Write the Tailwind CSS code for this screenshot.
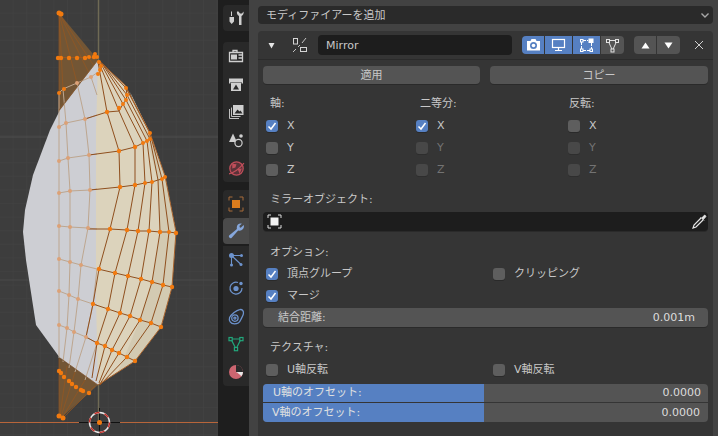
<!DOCTYPE html>
<html lang="ja">
<head>
<meta charset="utf-8">
<script src="https://cdn.jsdelivr.net/npm/@tailwindcss/browser@4"></script>
</head>
<body class="bg-[#3d3d3d]">
<div class="flex w-[718px] h-[436px] overflow-hidden bg-[#3d3d3d] text-[11px] leading-[14px] text-[#c8c8c8] font-['DejaVu_Sans','Noto_Sans_CJK_JP',sans-serif]">

  <!-- 3D viewport -->
  <div class="w-[218px] h-full shrink-0 bg-[#3d3d3d]">
    <svg width="218" height="436" viewBox="0 0 218 436" fill="none">
      <defs>
        <pattern id="minor" width="13.6" height="13.6" x="-1" y="-1" patternUnits="userSpaceOnUse">
          <path d="M13.6 0H0V13.6" stroke="#434343" stroke-width="1"/>
        </pattern>
      </defs>
      <rect width="218" height="436" fill="url(#minor)"/>
      <path d="M0 137H218" stroke="#4f4f4f"/>
      <path d="M0 280H218" stroke="#4b4b4b"/>
      <path d="M98.500 0V60" stroke="#6f6a55" stroke-width="1.500"/>
      <path d="M98.500 385V422" stroke="#6f6a55" stroke-width="1.500"/>
      <path d="M0 422.500H218" stroke="#b8653a"/>

      <!-- brown cones -->
      <path d="M59 13L98 60L59 112Z" fill="#735635"/>
      <path d="M59 358L98 385L61 418L59 416Z" fill="#735635"/>
      <g stroke="#9c561c" stroke-width="0.800" opacity="0.800">
        <path d="M59 13V112M59 13L63 89M59 13L77 83M59 13L91 77M59 13L98 72"/>
        <path d="M59 416V358M60 416L67 366M61 417L75 372M62 418L85 380M63 418L95 386"/>
      </g>
      <path d="M59 57.500H94" stroke="#9c561c"/>

      <!-- silhouette -->
      <path d="M98 60L60 110L50 130L33 175L25 210L23 232L26 260L36 325L60 358L98 385V60Z" fill="#cdced3"/>
      <path d="M98 60L125 85L150 133L165 176L176 232L172 287L161 327L135 361L98 385L96 300V130Z" fill="#dcd3bc"/>
      <path d="M130 92L150 133L165 176L176 232L172 287L161 327L135 361L118 372L140 320L152 282L160 232L158 180L147 141Z" fill="#d3cab2"/>

      <!-- left mirrored edges -->
      <g stroke="#bda68f" stroke-width="1" fill="none">
        <path d="M59 93L63 89L77 83L91 77L98 72"/>
        <path d="M59 127L66 123L85 119L97 115"/>
        <path d="M59 161L68 158L89 155L97 154"/>
        <path d="M59 193L70 191L90 190L97 189"/>
        <path d="M59 226L70 227L88 228L97 229"/>
        <path d="M59 259L70 262L81 265L97 269"/>
        <path d="M59 291L69 295L78 299L93 304L97 305"/>
        <path d="M59 325L67 328L74 332L86 337L97 343"/>
        <path d="M59 93V358"/>
        <path d="M63 89L66 123L68 158L70 191L70 227L70 262L69 295L67 328L63 362"/>
        <path d="M77 83L85 119L89 155L90 190L88 228L81 265L78 299L74 332L69 368"/>
        <path d="M91 77L97 95"/>
        <path d="M97 269L93 304L86 337L75 372"/>
        <path d="M97 343L85 380"/>
      </g>
      <!-- right edges -->
      <g stroke="#8f4f1e" stroke-width="1" fill="none">
        <path d="M88 229L110 229L127 230L138 231L149 231L160 232L169 232L176 233"/>
        <path d="M98 269L115 273L128 276L141 279L152 282L163 285L172 287"/>
        <path d="M93 304L108 309L120 313L130 316L140 320L151 323L161 327"/>
        <path d="M86 337L97 343L105 346L112 350L119 353L127 357L135 361"/>
        <path d="M90 190L120 187L135 185L145 183L152 182L158 180L162 179L165 176"/>
        <path d="M89 155L119 151L135 147L143 143L147 141L150 139L150 133"/>
        <path d="M85 119L107 112L119 111L123 104L126 100L127 95L126 88"/>
        <path d="M98 62L107 112L119 151L120 187L110 229L99 269L93 304L86 337"/>
        <path d="M99 63L119 111L135 147L135 185L127 230L115 273L108 309L97 343L92 378"/>
        <path d="M100 62L123 104L143 143L145 183L138 231L128 276L120 313L105 346L96 381"/>
        <path d="M101 62L126 100L147 141L152 182L149 231L141 279L130 316L112 350L99 383"/>
        <path d="M102 63L127 95L150 139L158 180L160 232L152 282L140 320L119 353L100 384"/>
        <path d="M103 64L126 88L150 133L162 179L169 232L163 285L151 323L127 357L100 385"/>
      </g>
      <path d="M98 60L125 85L150 133L165 176L176 232L172 287L161 327L135 361L98 385" stroke="#a8622c" stroke-width="1"/>
      <path d="M98 60L59 110M98 385L60 358" stroke="#8a5a30" stroke-width="0.800"/>

      <!-- mirrored vertices -->
      <g fill="#dca176">
        <circle cx="59" cy="127" r="2"/><circle cx="66" cy="123" r="2"/><circle cx="85" cy="119" r="2"/><circle cx="91" cy="77" r="2"/>
        <circle cx="77" cy="83" r="2"/>
        <circle cx="59" cy="161" r="2"/><circle cx="68" cy="158" r="2"/><circle cx="89" cy="155" r="2"/>
        <circle cx="59" cy="193" r="2"/><circle cx="70" cy="191" r="2"/><circle cx="90" cy="190" r="2"/>
        <circle cx="59" cy="226" r="2"/><circle cx="70" cy="227" r="2"/><circle cx="88" cy="228" r="2"/>
        <circle cx="59" cy="259" r="2"/><circle cx="70" cy="262" r="2"/><circle cx="81" cy="265" r="2"/>
        <circle cx="59" cy="325" r="2"/><circle cx="67" cy="328" r="2"/><circle cx="74" cy="332" r="2"/><circle cx="86" cy="337" r="2"/>
        <circle cx="59" cy="291" r="2"/><circle cx="69" cy="295" r="2"/><circle cx="78" cy="299" r="2"/>
      </g>
      <!-- selected vertices -->
      <g fill="#f27a0f">
        <circle cx="59" cy="13" r="2.500"/><circle cx="61" cy="14" r="2.500"/>
        <circle cx="58" cy="58" r="2.200"/><circle cx="61" cy="58" r="2.200"/><circle cx="69" cy="58" r="2.200"/><circle cx="77" cy="58" r="2.200"/><circle cx="85" cy="58" r="2.200"/><circle cx="89" cy="57" r="2"/><circle cx="94" cy="57" r="2.200"/><circle cx="95" cy="54" r="2"/><circle cx="97" cy="57" r="2"/>
        <circle cx="59" cy="93" r="2"/><circle cx="64" cy="89" r="2"/>
        <circle cx="99" cy="62" r="2"/><circle cx="101" cy="66" r="2"/><circle cx="100" cy="70" r="2"/><circle cx="98" cy="74" r="2"/>
        <circle cx="107" cy="112" r="2.200"/><circle cx="119" cy="108" r="2.200"/><circle cx="123" cy="104" r="2"/><circle cx="126" cy="100" r="2"/><circle cx="127" cy="95" r="2"/><circle cx="126" cy="88" r="2"/>
        <circle cx="119" cy="151" r="2.200"/><circle cx="135" cy="147" r="2.200"/><circle cx="143" cy="143" r="2"/><circle cx="147" cy="141" r="2"/><circle cx="150" cy="139" r="2"/><circle cx="150" cy="133" r="2"/>
        <circle cx="120" cy="187" r="2.200"/><circle cx="135" cy="185" r="2.200"/><circle cx="145" cy="183" r="2"/><circle cx="152" cy="182" r="2"/><circle cx="162" cy="179" r="2"/><circle cx="165" cy="177" r="2"/>
        <circle cx="110" cy="229" r="2.200"/><circle cx="127" cy="230" r="2.200"/><circle cx="138" cy="231" r="2.200"/><circle cx="149" cy="231" r="2.200"/><circle cx="160" cy="232" r="2.200"/><circle cx="169" cy="232" r="2"/><circle cx="176" cy="233" r="2.200"/>
        <circle cx="99" cy="269" r="2.200"/><circle cx="115" cy="273" r="2.200"/><circle cx="128" cy="276" r="2.200"/><circle cx="141" cy="279" r="2.200"/><circle cx="152" cy="282" r="2.200"/><circle cx="163" cy="285" r="2.200"/><circle cx="172" cy="287" r="2.200"/>
        <circle cx="93" cy="304" r="2.200"/><circle cx="108" cy="309" r="2.200"/><circle cx="120" cy="313" r="2.200"/><circle cx="130" cy="316" r="2.200"/><circle cx="140" cy="320" r="2.200"/><circle cx="151" cy="323" r="2.200"/><circle cx="161" cy="327" r="2.200"/>
        <circle cx="97" cy="343" r="2.200"/><circle cx="105" cy="346" r="2.200"/><circle cx="112" cy="350" r="2.200"/><circle cx="119" cy="353" r="2.200"/><circle cx="127" cy="357" r="2.200"/><circle cx="135" cy="361" r="2.200"/>
        <circle cx="59" cy="371" r="2.200"/><circle cx="61" cy="373" r="2.200"/><circle cx="64" cy="377" r="2.200"/><circle cx="69" cy="381" r="2.200"/><circle cx="72" cy="384" r="2.200"/><circle cx="76" cy="387" r="2.200"/><circle cx="81" cy="390" r="2.200"/><circle cx="83" cy="391" r="2.200"/><circle cx="89" cy="393" r="2.200"/>
        <circle cx="59" cy="416" r="2.500"/><circle cx="63" cy="418" r="2.500"/>
      </g>

      <!-- 3D cursor -->
      <path d="M79 422.500H120M99.500 412V436M99.500 408V416" stroke="#111111"/>
      <circle cx="99.500" cy="422.500" r="10" stroke="#e9e9e9" stroke-width="1.500"/>
      <circle cx="99.500" cy="422.500" r="10" stroke="#c8302a" stroke-width="1.500" stroke-dasharray="5.200 5.200"/>
      <circle cx="99.500" cy="422.500" r="2.500" fill="#f27a0f"/>
    </svg>
  </div>

  <!-- tab column -->
  <div class="w-[31px] h-full shrink-0 bg-[#1e1e1e] pl-[5px] flex flex-col pt-[5px]">
    <div class="h-[26px] bg-[#292929] rounded-l-[4px] flex items-center justify-center">
      <svg width="16" height="16" viewBox="0 0 16 16" fill="#cfcfcf"><path d="M3 1.500h1V6H3zM1.500 7h4.500v4.500L3.700 14 1.500 11.500z"/><path d="M9 1.500C8.500 3.500 9.500 5.500 11 6V15h2.500V6C15 5.500 16 3.500 15.500 1.500L14 3.500h-2L10.500 1.500z"/></svg>
    </div>
    <div class="h-[11px]"></div>
    <div class="h-[28px] bg-[#292929] rounded-tl-[4px] flex items-center justify-center">
      <svg width="16" height="16" viewBox="0 0 16 16" fill="none" stroke="#cfcfcf" stroke-width="1.300"><path d="M1.500 4.500h13v9h-13zM5 4.500V2.500h4v2M10.500 7H14M10.500 10H14"/><rect x="3" y="6.500" width="6" height="5" fill="#cfcfcf" stroke="none"/></svg>
    </div>
    <div class="h-[28px] bg-[#292929] flex items-center justify-center">
      <svg width="16" height="16" viewBox="0 0 16 16"><path d="M1 2.500h14v5h-1.500V6h-11v1.500H1z" fill="#cfcfcf"/><path d="M3 6.500h10V15H3z" fill="#cfcfcf"/><path d="M5 13.500l3-5 3 5z" fill="#2a2a2a"/></svg>
    </div>
    <div class="h-[28px] bg-[#292929] flex items-center justify-center">
      <svg width="16" height="16" viewBox="0 0 16 16" fill="none" stroke="#c0c0c0"><path d="M1.500 5v9.500H11M3.500 3.500v9h9"/><rect x="5" y="1" width="10.500" height="10" fill="#cfcfcf" stroke="none"/><path d="M6.500 9.500l3-4 2 2 1-1 2 3z" fill="#2a2a2a" stroke="none"/></svg>
    </div>
    <div class="h-[28px] bg-[#292929] flex items-center justify-center">
      <svg width="16" height="16" viewBox="0 0 16 16" fill="none"><path d="M5 1.500L9 10H1z" fill="#cfcfcf"/><circle cx="13" cy="4" r="1.800" fill="#cfcfcf"/><circle cx="10.500" cy="11" r="3.600" stroke="#cfcfcf" stroke-width="1.200" fill="#292929"/></svg>
    </div>
    <div class="h-[28px] bg-[#292929] rounded-bl-[4px] flex items-center justify-center">
      <svg width="17" height="17" viewBox="0 0 16 16" fill="none"><circle cx="8" cy="8" r="6.300" stroke="#bf4e5a" stroke-width="1.200" fill="#5a3238"/><path d="M1 13C5 12 11 8 15 3" stroke="#bf4e5a" stroke-width="1.200"/><path d="M4 3.500l4 .5-1 3-3 1zM9 8.500l4-.5-2 5z" fill="#bf4e5a"/></svg>
    </div>
    <div class="h-[8px]"></div>
    <div class="h-[28px] bg-[#292929] rounded-tl-[4px] flex items-center justify-center">
      <svg width="16" height="16" viewBox="0 0 16 16" fill="none" stroke="#a96c3a"><path d="M1 4.500V1h3.500M11.500 1H15v3.500M15 11.500V15h-3.500M4.500 15H1v-3.500"/><rect x="4" y="4" width="8" height="8" fill="#d97c1e" stroke="none"/></svg>
    </div>
    <div class="h-[26px] bg-[#4a4a4a] rounded-l-[4px] flex items-center justify-center mb-[2px]">
      <svg width="17" height="17" viewBox="0 0 16 16" fill="#86a7dc"><path d="M14.800 1.800L12 4.500 11 4 10.800 2.500 13 .6C10.600-.2 8 1.700 8.300 4.500c.1.800.1 1.200-.4 1.700L1.300 11.500c-1.500 1.300.8 3.800 2.200 2.300L8.900 7.700c.5-.5.900-.6 1.700-.5 3 .3 5.100-2.500 4.200-5.400z"/></svg>
    </div>
    <div class="h-[28px] bg-[#292929] flex items-center justify-center">
      <svg width="16" height="16" viewBox="0 0 16 16" fill="#6d93cd" stroke="#6d93cd"><path d="M3 3.500L13 3.500M3.500 3.500V13M3.500 3.500L13 12.500" stroke-width="1.100"/><circle cx="3.500" cy="3.500" r="2.500" stroke="none"/><circle cx="13.500" cy="3.500" r="1.500" stroke="none"/><circle cx="3.500" cy="13" r="1.500" stroke="none"/><circle cx="13" cy="12.500" r="1.500" stroke="none"/></svg>
    </div>
    <div class="h-[28px] bg-[#292929] flex items-center justify-center">
      <svg width="16" height="16" viewBox="0 0 16 16" fill="none"><path d="M10 2.500A6 6 0 1 0 14 8" stroke="#6d93cd" stroke-width="1.200"/><circle cx="8" cy="8.500" r="2.600" fill="#6d93cd"/><circle cx="13" cy="3.500" r="1.700" fill="#6d93cd"/></svg>
    </div>
    <div class="h-[28px] bg-[#292929] flex items-center justify-center">
      <svg width="17" height="17" viewBox="0 0 16 16" fill="none" stroke="#6d93cd" stroke-width="1.200"><path d="M11 1.500c2.500-.5 4 1.500 3.500 4-.5 2-1.500 3.500-2.500 5.500-1 2.500-3 4-6 4-3.500 0-5.500-3-4.500-6C3 6 8 2 11 1.500z"/><circle cx="6.500" cy="9.500" r="3"/><circle cx="6.500" cy="9.500" r="1"/></svg>
    </div>
    <div class="h-[28px] bg-[#292929] flex items-center justify-center">
      <svg width="16" height="16" viewBox="0 0 16 16" fill="none" stroke="#22a67b" stroke-width="1.200"><path d="M3 3h10L8 13z"/><rect x="1" y="1.500" width="3.200" height="3.200" fill="#292929"/><rect x="11.800" y="1.500" width="3.200" height="3.200" fill="#292929"/><rect x="6.400" y="11.500" width="3.200" height="3.200" fill="#292929"/></svg>
    </div>
    <div class="h-[28px] bg-[#292929] rounded-bl-[4px] flex items-center justify-center">
      <svg width="16" height="16" viewBox="0 0 16 16"><circle cx="8" cy="8" r="7" fill="#cc6570"/><path d="M8 1a7 7 0 0 1 7 7H8z" fill="#2a2a2a"/><path d="M8 8h7a7 7 0 0 1-1.700 4.500C12 10.500 10 9 8 8z" fill="#e8e8e8"/></svg>
    </div>
  </div>

  <!-- properties -->
  <div class="flex-1 h-full pl-[9px] pr-[5px] pt-[6px] bg-[#424242] flex flex-col">
    <div class="h-[18px] rounded-[4px] bg-[#2a2a2a] pl-[8px] pr-[3px] flex items-center justify-between">
      <span class="pt-px">モディファイアーを追加</span>
      <svg width="10" height="10" viewBox="0 0 10 10" fill="none" stroke="#a8a8a8" stroke-width="1.400"><path d="M1.500 3.500L5 7l3.500-3.500"/></svg>
    </div>
    <div class="mt-[7px] flex-1 rounded-t-[4px] bg-[#353535] flex flex-col">
      <!-- header -->
      <div class="h-[29px] flex items-center border-b border-[#2b2b2b] shrink-0">
        <svg class="ml-[10px]" width="7" height="7" viewBox="0 0 7 7" fill="#e5e5e5"><path d="M0.500 1h6L3.500 6.500z"/></svg>
        <svg class="ml-[17px]" width="16" height="16" viewBox="0 0 16 16" fill="none" stroke="#d5d5d5"><rect x="1.500" y="1.500" width="4" height="5.500"/><rect x="8.500" y="10.500" width="6" height="4"/><path d="M1 15l3-3M6 10l2-2M10 6l4-5" stroke-width="0.900"/></svg>
        <div class="ml-[10px] w-[194px] h-[20px] rounded-[4px] bg-[#1d1d1d] pl-[8px] flex items-center"><span class="pt-px">Mirror</span></div>
        <div class="ml-[10px] flex h-[18px] gap-px">
          <div class="w-[22px] bg-[#5680c2] rounded-l-[4px] flex items-center justify-center">
            <svg width="15" height="14" viewBox="0 0 15 14"><path d="M1 3h3.500l1-2h4l1 2H14v9.500H1z" fill="#ffffff"/><circle cx="7.500" cy="7.500" r="3.500" fill="#5680c2"/><circle cx="7.500" cy="7.500" r="1.800" fill="#ffffff"/></svg>
          </div>
          <div class="w-[27px] bg-[#5680c2] flex items-center justify-center">
            <svg width="15" height="14" viewBox="0 0 15 14" fill="none" stroke="#ffffff" stroke-width="1.200"><rect x="1.500" y="1.500" width="12" height="8"/><path d="M7.500 9.500v3M4 12.500h7"/></svg>
          </div>
          <div class="w-[27px] bg-[#5680c2] flex items-center justify-center">
            <svg width="15" height="15" viewBox="0 0 15 15" fill="none" stroke="#ffffff"><path d="M4 2.500h5M2.500 4v7M12.500 5v6M4 12.500h7" stroke-dasharray="3 1"/><rect x="1.500" y="1.500" width="2.500" height="2.500"/><rect x="9.500" y="0.500" width="5" height="4.500" fill="#ffffff" stroke="none"/><rect x="1.500" y="11" width="2.500" height="2.500"/><rect x="11" y="11" width="2.500" height="2.500"/></svg>
          </div>
          <div class="w-[23px] bg-[#545454] rounded-r-[4px] flex items-center justify-center">
            <svg width="15" height="15" viewBox="0 0 15 15" fill="none" stroke="#e2e2e2"><path d="M3 2.500h9L7.500 12.500z"/><rect x="1.500" y="1.500" width="3" height="3" fill="#545454"/><rect x="10.500" y="1.500" width="3" height="3" fill="#545454"/><rect x="6" y="11" width="3" height="3" fill="#545454"/></svg>
          </div>
        </div>
        <div class="ml-[10px] flex h-[18px] gap-px">
          <div class="w-[22px] bg-[#545454] rounded-l-[4px] flex items-center justify-center">
            <svg width="9" height="7" viewBox="0 0 9 7" fill="#ffffff"><path d="M4.500 0.500L8.500 6.500H0.500z"/></svg>
          </div>
          <div class="w-[23px] bg-[#545454] rounded-r-[4px] flex items-center justify-center">
            <svg width="9" height="7" viewBox="0 0 9 7" fill="#ffffff"><path d="M0.500 0.500h8L4.500 6.500z"/></svg>
          </div>
        </div>
        <svg class="ml-[14px]" width="10" height="10" viewBox="0 0 10 10" stroke="#cfcfcf" stroke-width="1"><path d="M1 1l8 8M9 1L1 9"/></svg>
      </div>

      <!-- body -->
      <div class="px-[5px] pt-[6px] flex flex-col">
        <div class="flex gap-[10px] h-[18px]">
          <div class="w-[217px] rounded-[4px] bg-[#545454] shadow-[0_1px_0_#2a2a2a] flex items-center justify-center"><span class="pt-px">適用</span></div>
          <div class="w-[218px] rounded-[4px] bg-[#545454] shadow-[0_1px_0_#2a2a2a] flex items-center justify-center"><span class="pt-px">コピー</span></div>
        </div>

        <div class="mt-[13px] grid grid-cols-[150px_152px_1fr]">
          <div class="flex flex-col">
            <div class="pl-[7px] h-[14px]">軸:</div>
            <div class="mt-[8px] flex items-center h-[14px] gap-[9px] pl-[3px]"><span class="w-[12px] h-[12px] rounded-[3px] bg-[#5680c2] shadow-[0_1px_0_#2a2a2a] flex items-center justify-center"><svg width="10" height="10" viewBox="0 0 10 10" fill="none" stroke="#ffffff" stroke-width="1.500"><path d="M1.500 5.500L4 8l4.500-6"/></svg></span><span>X</span></div>
            <div class="mt-[8px] flex items-center h-[14px] gap-[9px] pl-[3px]"><span class="w-[12px] h-[12px] rounded-[3px] bg-[#5e5e5e] shadow-[0_1px_0_#2a2a2a]"></span><span>Y</span></div>
            <div class="mt-[8px] flex items-center h-[14px] gap-[9px] pl-[3px]"><span class="w-[12px] h-[12px] rounded-[3px] bg-[#5e5e5e] shadow-[0_1px_0_#2a2a2a]"></span><span>Z</span></div>
          </div>
          <div class="flex flex-col">
            <div class="pl-[7px] h-[14px]">二等分:</div>
            <div class="mt-[8px] flex items-center h-[14px] gap-[9px] pl-[3px]"><span class="w-[12px] h-[12px] rounded-[3px] bg-[#5680c2] shadow-[0_1px_0_#2a2a2a] flex items-center justify-center"><svg width="10" height="10" viewBox="0 0 10 10" fill="none" stroke="#ffffff" stroke-width="1.500"><path d="M1.500 5.500L4 8l4.500-6"/></svg></span><span>X</span></div>
            <div class="mt-[8px] flex items-center h-[14px] gap-[9px] pl-[3px] text-[#737373]"><span class="w-[12px] h-[12px] rounded-[3px] bg-[#484848] shadow-[0_1px_0_#2e2e2e]"></span><span>Y</span></div>
            <div class="mt-[8px] flex items-center h-[14px] gap-[9px] pl-[3px] text-[#737373]"><span class="w-[12px] h-[12px] rounded-[3px] bg-[#484848] shadow-[0_1px_0_#2e2e2e]"></span><span>Z</span></div>
          </div>
          <div class="flex flex-col">
            <div class="pl-[4px] h-[14px]">反転:</div>
            <div class="mt-[8px] flex items-center h-[14px] gap-[9px] pl-[3px]"><span class="w-[12px] h-[12px] rounded-[3px] bg-[#5e5e5e] shadow-[0_1px_0_#2a2a2a]"></span><span>X</span></div>
            <div class="mt-[8px] flex items-center h-[14px] gap-[9px] pl-[3px] text-[#737373]"><span class="w-[12px] h-[12px] rounded-[3px] bg-[#484848] shadow-[0_1px_0_#2e2e2e]"></span><span>Y</span></div>
            <div class="mt-[8px] flex items-center h-[14px] gap-[9px] pl-[3px] text-[#737373]"><span class="w-[12px] h-[12px] rounded-[3px] bg-[#484848] shadow-[0_1px_0_#2e2e2e]"></span><span>Z</span></div>
          </div>
        </div>

        <div class="mt-[16px] pl-[7px] h-[14px]">ミラーオブジェクト:</div>
        <div class="mt-[5px] h-[19px] rounded-[4px] bg-[#1d1d1d] shadow-[0_1px_0_#2a2a2a] flex items-center justify-between pl-[4px] pr-[1px]">
          <svg width="15" height="15" viewBox="0 0 15 15" fill="none" stroke="#dddddd"><path d="M1 4V1h3M11 1h3v3M14 11v3h-3M4 14H1v-3"/><rect x="3.500" y="3.500" width="8" height="8" fill="#f2f2f2" stroke="none"/></svg>
          <svg width="15" height="15" viewBox="0 0 15 15" fill="none" stroke="#e5e5e5"><path d="M9 4L2 11l-1 3 3-1 7-7" stroke-width="1.200"/><path d="M8.500 3L12 6.500M10 4l2-2.500c1-.8 2.500.7 1.500 1.700L11 5.500z" fill="#e5e5e5"/></svg>
        </div>

        <div class="mt-[15px] pl-[7px] h-[14px]">オプション:</div>
        <div class="mt-[7px] grid grid-cols-[230px_1fr] h-[14px]">
          <div class="flex items-center gap-[9px] pl-[3px]"><span class="w-[12px] h-[12px] rounded-[3px] bg-[#5680c2] shadow-[0_1px_0_#2a2a2a] flex items-center justify-center"><svg width="10" height="10" viewBox="0 0 10 10" fill="none" stroke="#ffffff" stroke-width="1.500"><path d="M1.500 5.500L4 8l4.500-6"/></svg></span><span>頂点グループ</span></div>
          <div class="flex items-center gap-[9px]"><span class="w-[12px] h-[12px] rounded-[3px] bg-[#5e5e5e] shadow-[0_1px_0_#2a2a2a]"></span><span>クリッピング</span></div>
        </div>
        <div class="mt-[8px] flex items-center h-[14px] gap-[9px] pl-[3px]"><span class="w-[12px] h-[12px] rounded-[3px] bg-[#5680c2] shadow-[0_1px_0_#2a2a2a] flex items-center justify-center"><svg width="10" height="10" viewBox="0 0 10 10" fill="none" stroke="#ffffff" stroke-width="1.500"><path d="M1.500 5.500L4 8l4.500-6"/></svg></span><span>マージ</span></div>
        <div class="mt-[5px] h-[19px] rounded-[4px] bg-[#545454] shadow-[0_1px_0_#2a2a2a] flex items-center justify-between pl-[15px] pr-[13px]">
          <span>結合距離:</span><span class="text-[#dcdcdc]">0.001m</span>
        </div>

        <div class="mt-[14px] pl-[7px] h-[14px]">テクスチャ:</div>
        <div class="mt-[8px] grid grid-cols-[230px_1fr] h-[14px]">
          <div class="flex items-center gap-[9px] pl-[3px]"><span class="w-[12px] h-[12px] rounded-[3px] bg-[#5e5e5e] shadow-[0_1px_0_#2a2a2a]"></span><span>U軸反転</span></div>
          <div class="flex items-center gap-[9px]"><span class="w-[12px] h-[12px] rounded-[3px] bg-[#5e5e5e] shadow-[0_1px_0_#2a2a2a]"></span><span>V軸反転</span></div>
        </div>
        <div class="mt-[7px] flex flex-col gap-px rounded-[4px] overflow-hidden">
          <div class="h-[18px] flex bg-[#545454]">
            <div class="w-[221px] bg-[#5680c2] pl-[10px] flex items-center text-[#e0e0e0]">U軸のオフセット:</div>
            <div class="flex-1 flex items-center justify-end pr-[7px] text-[#dcdcdc]">0.0000</div>
          </div>
          <div class="h-[19px] flex bg-[#545454]">
            <div class="w-[221px] bg-[#5680c2] pl-[9px] flex items-center text-[#e0e0e0]">V軸のオフセット:</div>
            <div class="flex-1 flex items-center justify-end pr-[8px] text-[#dcdcdc]">0.0000</div>
          </div>
        </div>
      </div>
    </div>
  </div>
</div>
</body>
</html>
